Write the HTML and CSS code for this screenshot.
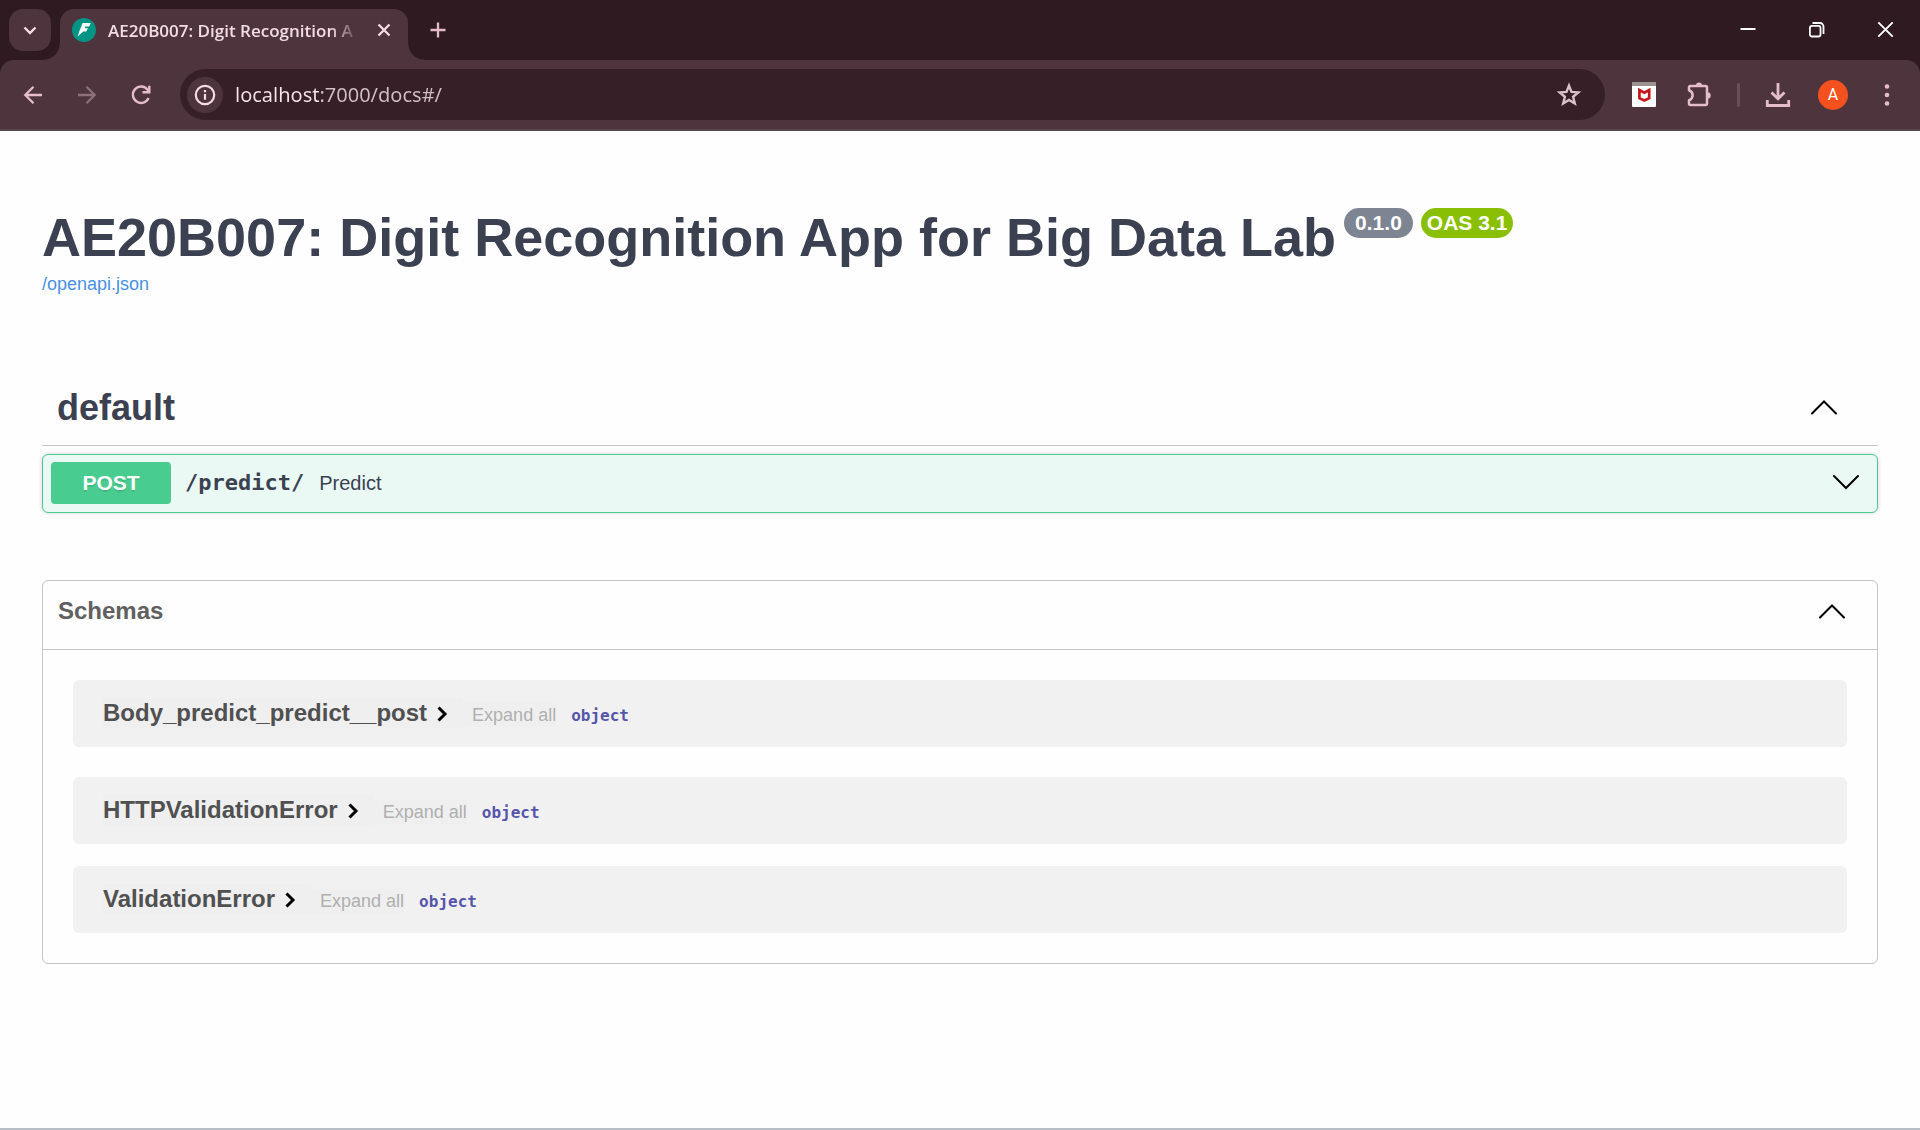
FILE: index.html
```html
<!DOCTYPE html>
<html lang="en">
<head>
<meta charset="utf-8">
<meta name="viewport" content="width=device-width, initial-scale=1">
<title>AE20B007: Digit Recognition App for Big Data Lab</title>
<link rel="stylesheet" href="styles.css">
</head>
<body>
<header class="browser">
  <div class="tab-strip">
    <button class="tab-search" type="button" aria-label="Search tabs">
      <svg width="24" height="24" viewBox="0 0 24 24"><path d="M6.500 9.500l5.500 5.500 5.500-5.500" fill="none" stroke="currentColor" stroke-width="2.400"/></svg>
    </button>
    <div class="tab">
      <svg class="favicon" width="24" height="24" viewBox="0 0 24 24"><circle cx="12" cy="12" r="12" fill="#009485"/><path d="M10.600 5H18.700L17.200 8.600H13.300L12.600 10.200H16L14.200 13.400H11.300L5.600 18.600L7.600 12.600Z" fill="#fff"/></svg>
      <span class="tab-title">AE20B007: Digit Recognition A</span>
      <button class="tab-close" type="button" aria-label="Close tab">
        <svg width="24" height="24" viewBox="0 0 24 24"><path d="M6.500 6.500l11 11M17.500 6.500l-11 11" stroke="currentColor" stroke-width="2.300"/></svg>
      </button>
    </div>
    <button class="new-tab" type="button" aria-label="New tab">
      <svg width="24" height="24" viewBox="0 0 24 24"><path d="M12 4.500v15M4.500 12h15" stroke="currentColor" stroke-width="2.300"/></svg>
    </button>
    <div class="window-controls">
      <button type="button" aria-label="Minimize"><svg width="24" height="24" viewBox="0 0 24 24"><path d="M4.500 11h15" stroke="currentColor" stroke-width="2"/></svg></button>
      <button type="button" aria-label="Restore"><svg width="24" height="24" viewBox="0 0 24 24" fill="none" stroke="currentColor" stroke-width="1.800"><rect x="4.900" y="7.900" width="10.600" height="10.600" rx="2"/><path d="M7.500 5h7.500a3.500 3.500 0 0 1 3.500 3.500v7.500"/></svg></button>
      <button type="button" aria-label="Close window"><svg width="24" height="24" viewBox="0 0 24 24"><path d="M4.300 4.300l14.400 14.400M18.700 4.300L4.300 18.700" stroke="currentColor" stroke-width="1.900"/></svg></button>
    </div>
  </div>
  <div class="toolbar">
    <nav class="history" aria-label="History">
      <button type="button" aria-label="Back"><svg width="24" height="24" viewBox="0 0 24 24" fill="none" stroke="currentColor" stroke-width="2.300"><path d="M21 12H4M12.500 3.800L4.300 12l8.200 8.200"/></svg></button>
      <button type="button" aria-label="Forward" disabled><svg width="24" height="24" viewBox="0 0 24 24" fill="none" stroke="currentColor" stroke-width="2.300"><path d="M3 12H20M11.500 3.800L19.700 12l-8.200 8.200"/></svg></button>
      <button type="button" aria-label="Reload"><svg width="24" height="24" viewBox="0 0 24 24" fill="none" stroke="currentColor" stroke-width="2.400"><path d="M19.600 15a8.200 8.200 0 1 1-1-8.300l1.200 1.700"/><path d="M20.300 2.700v6.600h-6.800"/></svg></button>
    </nav>
    <div class="omnibox">
      <button class="site-info" type="button" aria-label="Site information"><svg width="22" height="22" viewBox="0 0 22 22"><circle cx="11" cy="11" r="9.200" fill="none" stroke="currentColor" stroke-width="2.200"/><path d="M11 10v5.800M11 6v2.200" stroke="currentColor" stroke-width="2.200"/></svg></button>
      <input class="url" type="text" value="localhost:7000/docs#/" aria-label="Address">
      <button class="bookmark" type="button" aria-label="Bookmark this page"><svg width="26" height="26" viewBox="0 0 26 26"><path d="M13 3.600l2.500 6.300 6.800.500-5.200 4.400 1.700 6.700-5.800-3.600-5.800 3.600 1.700-6.700-5.200-4.400 6.800-.500z" fill="none" stroke="currentColor" stroke-width="2.400"/></svg></button>
    </div>
    <div class="tools">
      <button type="button" aria-label="McAfee WebAdvisor"><svg width="26" height="26" viewBox="0 0 26 26"><rect x="1" y="0" width="24" height="25" rx="1" fill="#fff"/><path d="M1 0h24v4H1z" fill="#9b9290"/><path d="M8.400 8v8.200l4.900 2.300 4.900-2.300V8l-4.900 2.700z" fill="none" stroke="#c3171d" stroke-width="2.700"/></svg></button>
      <button type="button" aria-label="Extensions"><svg width="28" height="28" viewBox="0 0 28 28"><path d="M5 9.300V6.500A1.500 1.500 0 0 1 6.500 5H21.500A1.500 1.500 0 0 1 23 6.500V22.500A1.500 1.500 0 0 1 21.500 24H6.500A1.500 1.500 0 0 1 5 22.500V19.200C9.800 17.500 9.800 11 5 9.300Z" fill="none" stroke="currentColor" stroke-width="2.500" stroke-linejoin="round"/><path d="M12 4.500a3 3 0 0 1 6 0zM23.500 11.200a3.200 3.200 0 0 1 0 6.400z" fill="currentColor"/></svg></button>
      <span class="divider"></span>
      <button type="button" aria-label="Downloads"><svg width="26" height="26" viewBox="0 0 26 26" fill="none" stroke="currentColor" stroke-width="2.800"><path d="M13 1v15.500M6.500 10.500l6.500 6.300 6.500-6.300M2.300 18v5.500h21.400V18"/></svg></button>
      <button class="avatar" type="button" aria-label="Profile">A</button>
      <button type="button" aria-label="Menu"><svg width="24" height="24" viewBox="0 0 24 24" fill="currentColor"><circle cx="12" cy="3.500" r="2.300"/><circle cx="12" cy="12" r="2.300"/><circle cx="12" cy="20.500" r="2.300"/></svg></button>
    </div>
  </div>
</header>

<main class="docs">
  <section class="info">
    <div class="info-title">
      <h1>AE20B007: Digit Recognition App for Big Data Lab</h1>
      <span class="badge badge-version">0.1.0</span>
      <span class="badge badge-oas">OAS 3.1</span>
    </div>
    <a class="spec-link" href="/openapi.json">/openapi.json</a>
  </section>

  <section class="tag">
    <div class="tag-header">
      <h2>default</h2>
      <button class="toggle" type="button" aria-label="Collapse default"><svg width="30" height="30" viewBox="0 0 30 30"><path d="M3 20.500L15 8.500l12 12"/></svg></button>
    </div>
    <div class="operation">
      <button class="method" type="button">POST</button>
      <span class="path">/predict/</span>
      <span class="summary">Predict</span>
      <button class="toggle" type="button" aria-label="Expand operation"><svg width="30" height="30" viewBox="0 0 30 30"><path d="M3 8l12 12 12-12"/></svg></button>
    </div>
  </section>

  <section class="schemas">
    <div class="schemas-header">
      <h2>Schemas</h2>
      <button class="toggle" type="button" aria-label="Collapse schemas"><svg width="30" height="30" viewBox="0 0 30 30"><path d="M3 21.500L15 9.500l12 12"/></svg></button>
    </div>
    <div class="models">
      <div class="model model-first">
        <button class="model-name" type="button">Body_predict_predict__post<svg width="30" height="30" viewBox="0 0 30 30"><path d="M11.500 9.500l6.500 6.500-6.500 6.500"/></svg></button>
        <button class="expand" type="button">Expand all</button>
        <strong class="type">object</strong>
      </div>
      <div class="model">
        <button class="model-name" type="button">HTTPValidationError<svg width="30" height="30" viewBox="0 0 30 30"><path d="M11.500 9.500l6.500 6.500-6.500 6.500"/></svg></button>
        <button class="expand" type="button">Expand all</button>
        <strong class="type">object</strong>
      </div>
      <div class="model">
        <button class="model-name" type="button">ValidationError<svg width="30" height="30" viewBox="0 0 30 30"><path d="M11.500 9.500l6.500 6.500-6.500 6.500"/></svg></button>
        <button class="expand" type="button">Expand all</button>
        <strong class="type">object</strong>
      </div>
    </div>
  </section>
</main>
</body>
</html>
```

FILE: styles.css
```css
* {
  box-sizing: border-box;
}

body {
  margin: 0;
  min-height: 100vh;
  display: flex;
  flex-direction: column;
  border-bottom: 2px solid #b8bec6;
  background: #fefefe;
  color: #3b4151;
  font-family: "Liberation Sans", Arial, sans-serif;
}

button {
  padding: 0;
  border: 0;
  background: none;
  color: inherit;
  font: inherit;
  cursor: pointer;
}

svg {
  display: block;
  flex: none;
}

h1,
h2 {
  margin: 0;
}

/* Browser frame */

.browser {
  background: #2e1a20;
  color: #e5bdca;
  font-family: "Noto Sans", "Open Sans", sans-serif;
}

.tab-strip {
  display: flex;
  align-items: center;
  height: 60px;
  padding: 0 0 0 9px;
}

.tab-search {
  display: grid;
  place-items: center;
  width: 42px;
  height: 42px;
  border-radius: 14px;
  background: #4e343c;
  color: #f3dde3;
}

.tab {
  position: relative;
  display: flex;
  align-items: center;
  align-self: flex-end;
  gap: 12px;
  width: 348px;
  height: 51px;
  margin-left: 9px;
  padding: 0 12px 9px;
  border-radius: 14px 14px 0 0;
  background: #4e343c;
  color: #f3dde3;
}

.tab::before,
.tab::after {
  content: "";
  position: absolute;
  bottom: 0;
  width: 16px;
  height: 16px;
}

.tab::before {
  right: 100%;
  background: radial-gradient(circle at 0 0, transparent 15px, #4e343c 16px);
}

.tab::after {
  left: 100%;
  background: radial-gradient(circle at 100% 0, transparent 15px, #4e343c 16px);
}

.tab-title {
  flex: 1;
  padding-top: 2px;
  white-space: nowrap;
  font-family: "Open Sans", "Noto Sans", sans-serif;
  font-size: 17px;
  font-weight: 600;
  line-height: 24px;
  mask-image: linear-gradient(to right, #000 88%, transparent 100%);
}

.new-tab {
  margin-left: 18px;
}

.window-controls {
  display: flex;
  margin-left: auto;
  color: #fff;
}

.window-controls button {
  display: grid;
  place-items: center;
  width: 69px;
  height: 60px;
}

.toolbar {
  display: flex;
  align-items: center;
  height: 71px;
  padding: 0 21px;
  border-bottom: 2px solid #56454b;
  border-radius: 14px 14px 0 0;
  background: #4e343c;
}

.history {
  display: flex;
  gap: 30px;
}

.history button:disabled {
  color: #8d707a;
}

.omnibox {
  display: flex;
  flex: 1;
  align-items: center;
  height: 51px;
  margin: 0 26px 0 27px;
  padding: 0 23px 0 7px;
  border-radius: 26px;
  background: #361f26;
}

.site-info {
  display: grid;
  place-items: center;
  width: 36px;
  height: 36px;
  border-radius: 50%;
  background: #4e343c;
  color: #f3dde3;
}

.url {
  flex: 1;
  min-width: 0;
  margin-left: 12px;
  padding: 0;
  border: 0;
  outline: 0;
  background: linear-gradient(to right, #f6e6ea 84px, #d0bfc4 84px) text;
  color: transparent;
  font: 20px/28px "Noto Sans", "Open Sans", sans-serif;
}

.bookmark {
  color: #d9c3ca;
}

.tools {
  display: flex;
  align-items: center;
  gap: 27px;
}

.divider {
  width: 3px;
  height: 24px;
  margin: 0 -2px;
  border-radius: 2px;
  background: #6b4f58;
}

.avatar {
  width: 30px;
  height: 30px;
  border-radius: 50%;
  background: #f4511e;
  color: #fff;
  font: 16px/30px Roboto, sans-serif;
}

/* API documentation */

.docs {
  flex: 1;
  padding: 76px 42px 80px;
}

.info-title {
  display: flex;
  align-items: flex-start;
  gap: 8px;
}

.info-title h1 {
  font-size: 54px;
  line-height: 60px;
}

.badge {
  margin-top: 1px;
  border-radius: 15px;
  color: #fff;
  font-size: 21px;
  font-weight: 700;
  line-height: 30px;
  white-space: nowrap;
}

.badge-version {
  padding: 0 11px;
  background: #7d8492;
}

.badge-oas {
  padding: 0 6px;
  background: #89bf04;
}

.spec-link {
  display: block;
  width: fit-content;
  margin-top: 7px;
  color: #4990e2;
  font-size: 18px;
  line-height: 21px;
  text-decoration: none;
}

.toggle {
  margin-left: auto;
}

.toggle path,
.model-name path {
  fill: none;
  stroke: #000;
  stroke-width: 2;
  stroke-linecap: round;
}

.tag {
  margin-top: 78px;
}

.tag-header {
  display: flex;
  align-items: center;
  padding: 14px 39px 16px 15px;
  border-bottom: 1px solid #c4c5c9;
}

.tag-header h2 {
  font-size: 36px;
  line-height: 42px;
}

.operation {
  display: flex;
  align-items: center;
  margin-top: 8px;
  padding: 7px 16px 8px 8px;
  border: 1px solid #49cc90;
  border-radius: 6px;
  background: #eaf9f3;
  box-shadow: 0 0 4px rgba(0, 0, 0, 0.19);
}

.method {
  width: 120px;
  height: 42px;
  border-radius: 4px;
  background: #49cc90;
  color: #fff;
  font-size: 21px;
  font-weight: 700;
  text-shadow: 0 2px 0 rgba(0, 0, 0, 0.1);
}

.path {
  margin-left: 14px;
  font: 700 22px/30px "DejaVu Sans Mono", monospace;
}

.summary {
  margin-left: 15px;
  font-size: 20px;
  line-height: 30px;
}

.schemas {
  margin-top: 67px;
  border: 1px solid #c4c5c9;
  border-radius: 6px;
}

.schemas-header {
  display: flex;
  align-items: center;
  height: 69px;
  padding: 0 30px 8px 15px;
  border-bottom: 1px solid #c4c5c9;
}

.schemas-header h2 {
  color: #606060;
  font-size: 24px;
  line-height: 28px;
}

.models {
  padding: 30px;
}

.model {
  display: flex;
  align-items: baseline;
  margin-top: 22px;
  padding: 18px 30px 19px;
  border-radius: 6px;
  background: #f1f1f1;
}

.model-first {
  margin: 0 0 30px;
}

.model-first + .model {
  margin-top: 0;
}

.model-name {
  display: flex;
  padding-right: 6px;
  background: #efefef;
  color: #505050;
  font-size: 24px;
  font-weight: 700;
  line-height: 30px;
}

.model-name path {
  stroke-width: 3;
  stroke-linecap: butt;
}

.expand {
  padding-left: 9px;
  background: #efefef;
  color: #afafaf;
  font-size: 18px;
  line-height: 24px;
}

.type {
  margin-left: 15px;
  color: #5555aa;
  font: 700 16px/24px "DejaVu Sans Mono", monospace;
}
```
